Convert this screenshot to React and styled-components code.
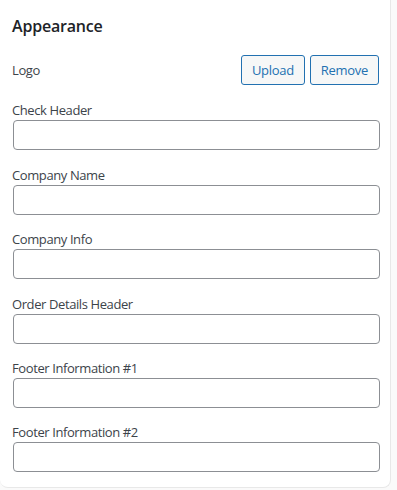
import React from "react"
import styled, { createGlobalStyle } from "styled-components"

const fields = [
    "Check Header",
    "Company Name",
    "Company Info",
    "Order Details Header",
    "Footer Information #1",
    "Footer Information #2",
]

const App = () => {
    return (
        <>
            <GlobalStyle />
            <StyledCard>
                <StyledTitle>Appearance</StyledTitle>
                <StyledLogoRow>
                    <StyledLabel as="span">Logo</StyledLabel>
                    <StyledButtons>
                        <StyledButton>Upload</StyledButton>
                        <StyledButton>Remove</StyledButton>
                    </StyledButtons>
                </StyledLogoRow>
                {fields.map(name => (
                    <StyledField key={name}>
                        <StyledLabel>{name}</StyledLabel>
                        <StyledInput type="text" />
                    </StyledField>
                ))}
            </StyledCard>
        </>
    )
}

const GlobalStyle = createGlobalStyle`
body {
    margin: 0;
    background: #fafafa;
    font-family: "Open Sans", "Noto Sans", sans-serif;
}
`

const StyledCard = styled.div`
width: 391px;
height: 488px;
box-sizing: border-box;
background: #fff;
border: 1px solid #e8e8e8;
border-top: none;
border-left: none;
border-radius: 0 0 8px 8px;
padding: 0 10px 0 12px;
display: flex;
flex-direction: column;
`

const StyledTitle = styled.h2`
margin: 14px 0 0;
font-size: 16px;
line-height: 24px;
font-weight: 600;
color: #1d2327;
letter-spacing: -0.2px;
`

const StyledLogoRow = styled.div`
display: flex;
align-items: center;
justify-content: space-between;
margin-top: 17px;
margin-bottom: 1px;
padding-right: 1px;
`

const StyledButtons = styled.div`
display: flex;
gap: 5px;
`

const StyledButton = styled.button`
height: 30px;
padding: 0 10px;
background: #f6f7f7;
border: 1px solid #2271b1;
border-radius: 3px;
color: #2271b1;
font: 13px "Open Sans", "Noto Sans", sans-serif;
letter-spacing: -0.3px;
cursor: pointer;
`

const StyledField = styled.div`
display: flex;
flex-direction: column;
margin-top: 15.4px;
&:first-of-type {
    margin-top: 0;
}
`

const StyledLabel = styled.label`
font-size: 13px;
line-height: 18px;
color: #3c434a;
letter-spacing: -0.4px;
margin-bottom: 1px;
`

const StyledInput = styled.input`
box-sizing: border-box;
height: 30px;
width: 367px;
margin-left: 1px;
border: 1px solid #8c8f94;
border-radius: 4px;
background: #fff;
outline: none;
`

export default App
